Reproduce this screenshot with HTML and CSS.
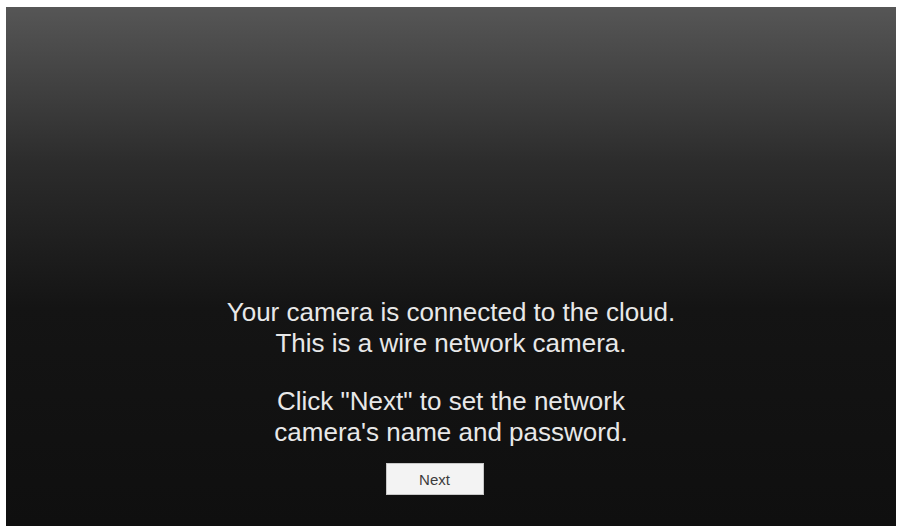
FILE: index.html
```html
<!DOCTYPE html>
<html lang="en">
<head>
  <meta charset="UTF-8">
  <title>Camera Setup</title>
  <link rel="stylesheet" href="styles.css">
</head>
<body>
  <div class="screen">
    <div class="message">
      <p>Your camera is connected to the cloud.<br>This is a wire network camera.</p>
      <p>Click "Next" to set the network<br>camera's name and password.</p>
    </div>
    <button class="next-btn">Next</button>
  </div>
</body>
</html>
```

FILE: styles.css
```css
html, body {
  margin: 0;
  padding: 0;
  background: #fff;
}
body {
  padding: 7px 2px 3px 6px;
  font-family: 'Liberation Sans', Arial, sans-serif;
}
.screen {
  height: 519px;
  background: linear-gradient(to bottom, #565656 0%, #2c2c2c 30%, #141414 58%, #0f0f0f 100%);
  display: flex;
  flex-direction: column;
  align-items: center;
  justify-content: flex-end;
  padding-bottom: 31px;
  box-sizing: border-box;
}
.message {
  text-align: center;
  color: #e8e8e8;
  font-size: 26px;
  line-height: 31px;
}
.message p {
  margin: 0 0 27px 0;
}
.message p:last-child {
  margin-bottom: 15px;
}
.next-btn {
  width: 98px;
  height: 32px;
  margin-right: 33px;
  background: #f3f3f3;
  border: 1px solid #c8c8c8;
  border-radius: 0;
  color: #3c3c3c;
  font-family: 'Liberation Sans', Arial, sans-serif;
  font-size: 15px;
  padding: 0;
}
```
